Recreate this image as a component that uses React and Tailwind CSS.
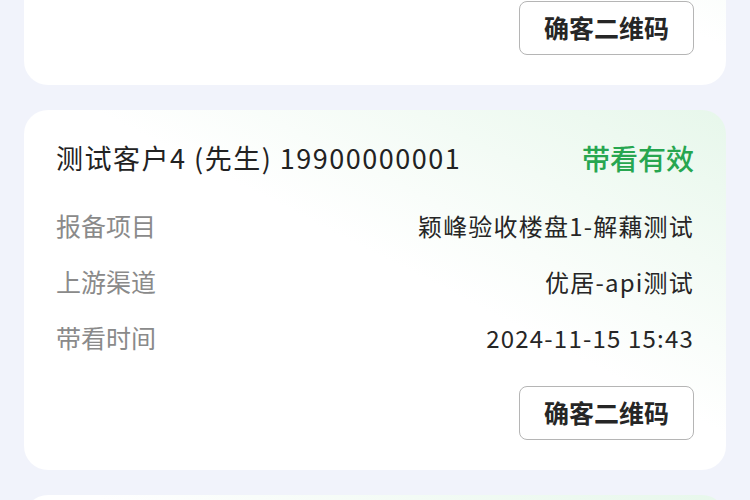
const cards = [
  {
    name: "测试客户3 (先生) 19900000002",
    status: "带看有效",
    rows: [
      ["报备项目", "颖峰验收楼盘1-解藕测试"],
      ["上游渠道", "优居-api测试"],
      ["带看时间", "2024-11-15 15:40"],
    ],
  },
  {
    name: "测试客户4 (先生) 19900000001",
    status: "带看有效",
    rows: [
      ["报备项目", "颖峰验收楼盘1-解藕测试"],
      ["上游渠道", "优居-api测试"],
      ["带看时间", "2024-11-15 15:43"],
    ],
  },
  {
    name: "测试客户5 (先生) 19900000003",
    status: "带看有效",
    rows: [
      ["报备项目", "颖峰验收楼盘1-解藕测试"],
      ["上游渠道", "优居-api测试"],
      ["带看时间", "2024-11-15 15:45"],
    ],
  },
];

const Card = ({ card }) => {
  return (
    <div className="rounded-[24px] bg-linear-to-bl from-[#e7f7eb] via-white via-45% to-white px-8 pt-[30px] pb-[30px]">
      <div className="flex items-center justify-between h-9">
        <span className="text-[27px] text-[#222222] tracking-[1.5px]">{card.name}</span>
        <span className="text-[28px] font-medium text-[#27a650]">{card.status}</span>
      </div>
      <div className="flex flex-col gap-5 mt-[32px]">
        {card.rows.map(([label, value]) => (
          <div key={label} className="flex items-center justify-between h-9">
            <span className="text-[25px] text-[#8a8a8a]">{label}</span>
            <span className="text-[24px] text-[#262626] tracking-[1.2px]">{value}</span>
          </div>
        ))}
      </div>
      <div className="flex justify-end mt-[30px]">
        <button className="w-[175px] h-[54px] rounded-lg border border-[#b5b5b5] bg-white text-[25px] font-bold text-[#262626]">
          确客二维码
        </button>
      </div>
    </div>
  );
};

export default function App() {
  return (
    <div
      className="w-[750px] h-[500px] overflow-hidden bg-[#f1f3fb]"
      style={{ fontFamily: '"Noto Sans CJK SC", "Noto Sans", sans-serif' }}
    >
      {/* list is scrolled: first card only shows its button */}
      <div className="flex flex-col gap-[25px] px-6 mt-[-275px]">
        {cards.map((card) => (
          <Card key={card.name} card={card} />
        ))}
      </div>
    </div>
  );
}
